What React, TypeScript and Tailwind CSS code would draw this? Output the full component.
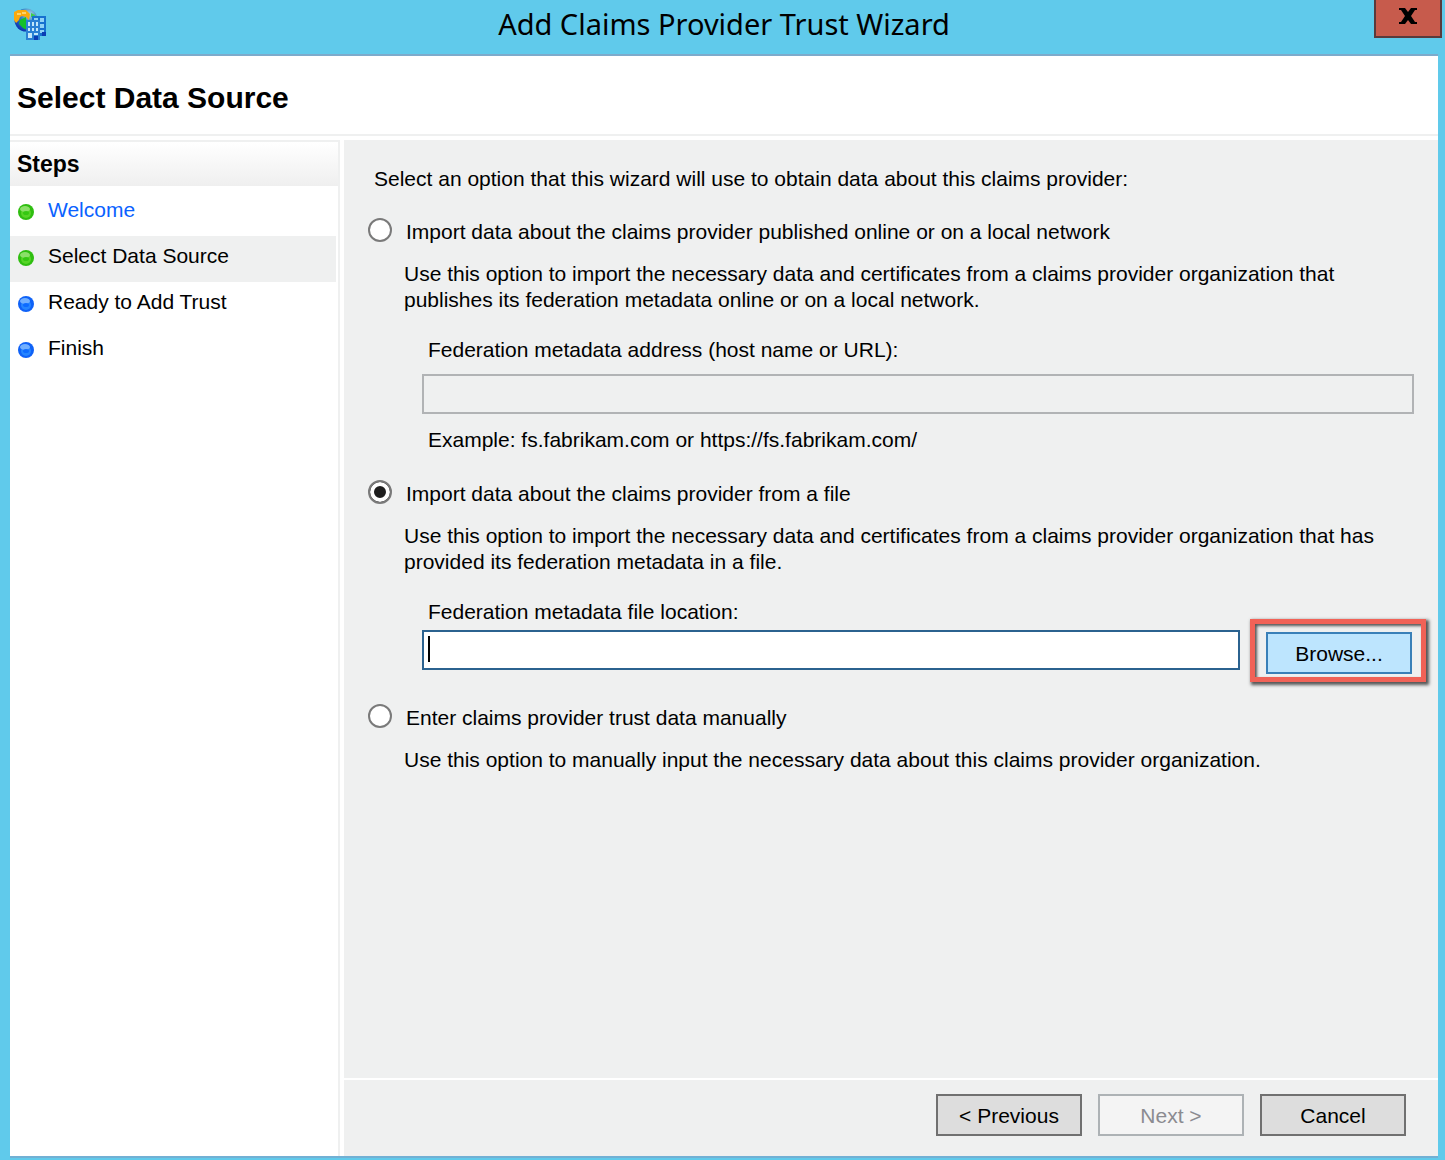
import { useState } from "react";

const steps = [
  { label: "Welcome", state: "done", link: true, current: false },
  { label: "Select Data Source", state: "done", link: false, current: true },
  { label: "Ready to Add Trust", state: "todo", link: false, current: false },
  { label: "Finish", state: "todo", link: false, current: false },
];

function WizardIcon() {
  return (
    <svg className="h-8 w-8 shrink-0" viewBox="0 0 32 32" aria-hidden="true">
      <defs>
        <radialGradient id="globe" cx="0.65" cy="0.25" r="0.8">
          <stop offset="0" stopColor="#a9d4e8" />
          <stop offset="0.5" stopColor="#2f7fc0" />
          <stop offset="1" stopColor="#0a2fb0" />
        </radialGradient>
      </defs>
      <circle cx="12" cy="12" r="11.5" fill="url(#globe)" />
      <path d="M6 12 L12 9 L13 22 L9 20 L5 16 Z" fill="#12c02a" />
      <path d="M17 5 l4 2 -1 3 -3 -1 Z" fill="#3fcf4a" />
      <path d="M0 12 V4 L4 2 H12 L16 6 L15 12 L12 9 L8 8 L6 9 L5 12 L2 15 Z" fill="#f9a90c" />
      <path d="M3 5 h4 v2 h-4 Z M8 4 h4 v2 h-4 Z" fill="#fbd36a" />
      <rect x="18" y="8" width="14" height="20" fill="#1671cf" />
      <path d="M20 10h4v4h-4z M26 10h4v4h-4z M26 16h4v4h-4z M26 22h4v3h-4z" fill="#8fd2f6" />
      <rect x="12" y="12" width="14" height="20" fill="#2a80d4" />
      <path
        d="M14 14h2v4h-2z M18 14h2v4h-2z M22 14h2v4h-2z M14 20h2v3h-2z M18 20h2v3h-2z M22 20h2v3h-2z M14 25h4v5h-4z M20 25h4v2h-4z"
        fill="#c3e8fb"
      />
      <path d="M20 28h4v4h-4z M28 24h4v4h-4z" fill="#0b3db4" />
    </svg>
  );
}

function StepDot({ state }: { state: string }) {
  const done = state === "done";
  return (
    <svg className="mt-1 h-4 w-4 shrink-0" viewBox="0 0 16 16" aria-hidden="true">
      <circle cx="8" cy="8" r="8" fill={done ? "#2fbe10" : "#0f62f7"} />
      <circle cx="8" cy="9" r="5" fill={done ? "#55d426" : "#2585ff"} />
      <ellipse cx="7" cy="5" rx="5" ry="3" fill={done ? "#8be069" : "#72b0ff"} />
      <ellipse cx="8" cy="9" rx="3" ry="2" fill={done ? "#34c812" : "#0d6bff"} />
    </svg>
  );
}

function Option(props: { id: string; label: string; value: string; onPick: (id: string) => void }) {
  return (
    <div className="flex h-7 items-center gap-3.5">
      <input
        type="radio"
        name="source"
        id={props.id}
        checked={props.value === props.id}
        onChange={() => props.onPick(props.id)}
        className="h-6 w-6 shrink-0 appearance-none rounded-full border-2 border-[#7a7a7a] bg-white checked:bg-[#1e1e1e] checked:shadow-[inset_0_0_0_4px_white]"
      />
      <label htmlFor={props.id} className="pt-1">
        {props.label}
      </label>
    </div>
  );
}

export default function App() {
  const [source, setSource] = useState("file");
  const [address, setAddress] = useState("");
  const [file, setFile] = useState("");

  return (
    <div className="flex min-h-screen flex-col bg-[#60caeb] pr-[7px] pb-0.5 pl-2.5 font-['Liberation_Sans',Arial,sans-serif] text-[21px] leading-[26px] text-black">
      <header className="relative flex h-[54px] items-start justify-center">
        <div className="absolute top-2 left-1">
          <WizardIcon />
        </div>
        <h1 className="pt-1 font-['Noto_Sans','Open_Sans',sans-serif] text-[29px] leading-10">
          Add Claims Provider Trust Wizard
        </h1>
        <button
          type="button"
          aria-label="Close"
          className="absolute top-0 -right-1 flex h-[38px] w-[68px] items-center justify-center border-2 border-t-0 border-[#5a3a3c] bg-[#c75b4c] pb-1"
        >
          <svg className="h-4 w-[18px]" viewBox="0 0 18 16" aria-hidden="true">
            <path d="M0 0h6l3 4 3-4h6v2h-2l-4 6 4 6h2v2h-6l-3-4-3 4H0v-2h2l4-6-4-6H0z" fill="#000" />
          </svg>
        </button>
      </header>

      <div className="flex flex-1 flex-col border-y-2 border-t-[#7daacb] border-b-[#72b0d4] bg-white">
        <h2 className="h-20 border-b-2 border-[#eff0f0] px-[7px] pt-[26px] text-[30px] leading-8 font-bold">
          Select Data Source
        </h2>

        <div className="mt-1 flex flex-1">
          <nav aria-label="Steps" className="w-[330px] shrink-0 border-t-2 border-r-2 border-[#eff0f0]">
            <h3 className="h-11 bg-linear-to-b from-white to-[#efefef] px-[7px] pt-2.5 text-[23px] leading-6 font-bold">
              Steps
            </h3>
            <ol className="mt-1 mr-0.5">
              {steps.map((step) => (
                <li
                  key={step.label}
                  aria-current={step.current ? "step" : undefined}
                  className={
                    step.current
                      ? "flex h-[46px] items-center gap-3.5 bg-[#eff0f0] px-2 pb-1.5"
                      : "flex h-[46px] items-center gap-3.5 px-2 pb-1.5"
                  }
                >
                  <StepDot state={step.state} />
                  {step.link ? (
                    <a href="#welcome" className="text-[#0a62ff]">
                      {step.label}
                    </a>
                  ) : (
                    <span>{step.label}</span>
                  )}
                </li>
              ))}
            </ol>
          </nav>

          <main className="ml-1 flex min-w-0 flex-1 flex-col bg-[#eff0f0]">
            <section className="flex-1 pl-6">
              <p className="pt-[26px] pl-1.5">
                Select an option that this wizard will use to obtain data about this claims provider:
              </p>

              <div className="mt-6">
                <Option
                  id="online"
                  value={source}
                  onPick={setSource}
                  label="Import data about the claims provider published online or on a local network"
                />
              </div>
              <p className="mt-[17px] pr-[50px] pl-9">
                Use this option to import the necessary data and certificates from a claims provider organization that
                publishes its federation metadata online or on a local network.
              </p>
              <div className="mt-6 pr-6 pl-[54px]">
                <label htmlFor="address" className="block pl-1.5">
                  Federation metadata address (host name or URL):
                </label>
                <input
                  id="address"
                  type="text"
                  disabled
                  value={address}
                  onChange={(e) => setAddress(e.target.value)}
                  className="mt-[11px] block h-10 w-full border-2 border-[#b1b3b5] bg-[#eff0f0] px-1.5"
                />
                <p className="mt-[13px] pl-1.5">Example: fs.fabrikam.com or https://fs.fabrikam.com/</p>
              </div>

              <div className="mt-[25px]">
                <Option
                  id="file"
                  value={source}
                  onPick={setSource}
                  label="Import data about the claims provider from a file"
                />
              </div>
              <p className="mt-[17px] pr-[50px] pl-9">
                Use this option to import the necessary data and certificates from a claims provider organization that has
                provided its federation metadata in a file.
              </p>
              <div className="mt-6 pr-3 pl-[54px]">
                <label htmlFor="location" className="block pl-1.5">
                  Federation metadata file location:
                </label>
                <div className="-mt-1.5 flex items-start gap-2.5">
                  <div className="relative mt-[11px] flex-1">
                    <input
                      id="location"
                      type="text"
                      value={file}
                      onChange={(e) => setFile(e.target.value)}
                      className="block h-10 w-full border-2 border-[#2b628f] bg-white px-1.5 caret-transparent outline-none"
                    />
                    <span className="absolute top-1.5 left-1.5 h-[26px] w-0.5 bg-black" />
                  </div>
                  <div className="border-5 border-[#f16257] pt-2 pr-[9px] pb-[3px] pl-[11px] shadow-[2px_2px_3px_1px_#555,inset_2px_2px_3px_#555]">
                    <button
                      type="button"
                      className="block h-[42px] w-[146px] border-2 border-[#3a80b8] bg-[#bde5fe] pt-0.5"
                    >
                      Browse...
                    </button>
                  </div>
                </div>
              </div>

              <div className="mt-5">
                <Option
                  id="manual"
                  value={source}
                  onPick={setSource}
                  label="Enter claims provider trust data manually"
                />
              </div>
              <p className="mt-[17px] pr-[50px] pl-9">
                Use this option to manually input the necessary data about this claims provider organization.
              </p>
            </section>

            <footer className="flex h-[78px] gap-4 border-t-2 border-white pt-3.5 pr-8">
              <button type="button" className="ml-auto h-[42px] w-[146px] border-2 border-[#707070] bg-[#dddddd] pt-0.5">
                &lt; Previous
              </button>
              <button
                type="button"
                disabled
                className="h-[42px] w-[146px] border-2 border-[#adb2b5] bg-[#f4f4f4] pt-0.5 text-[#8b8b90]"
              >
                Next &gt;
              </button>
              <button type="button" className="h-[42px] w-[146px] border-2 border-[#707070] bg-[#dddddd] pt-0.5">
                Cancel
              </button>
            </footer>
          </main>
        </div>
      </div>
    </div>
  );
}
